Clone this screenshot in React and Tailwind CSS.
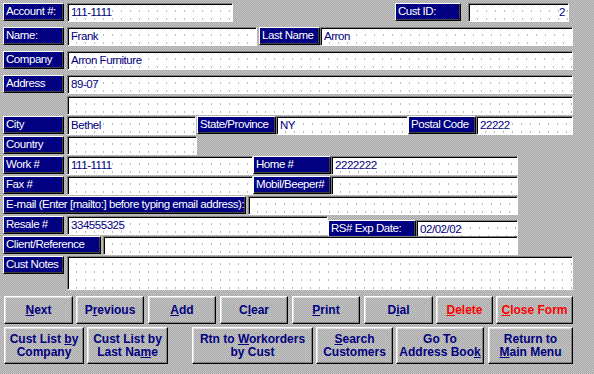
import React from "react";

const dither =
  "bg-[#b8b8b8] bg-[conic-gradient(#a6a6a6_25%,#c8c8c8_0_50%,#a6a6a6_0_75%,#c8c8c8_0)] bg-[length:2px_2px]";

const dots =
  "bg-white bg-[radial-gradient(circle,#b8b8b8_0.6px,transparent_0.8px)] bg-[length:9px_8px] bg-[position:4px_3px]";

function Label({ className = "", children }) {
  return (
    <div
      className={`h-[18px] shrink-0 bg-[#000080] text-white text-[11.5px] tracking-[-0.45px] leading-none flex items-center pl-[2px] whitespace-nowrap overflow-hidden border border-t-white border-l-white border-b-black border-r-black shadow-[inset_-1px_-1px_0_#404040] ${className}`}
    >
      {children}
    </div>
  );
}

function Field({ className = "", children }) {
  return (
    <div
      className={`h-[19px] shrink-0 ${dots} text-[#000080] text-[11.5px] tracking-[-0.45px] leading-none flex items-center pl-[3px] pr-[3px] whitespace-nowrap border border-t-[#808080] border-l-[#808080] border-b-white border-r-white shadow-[inset_1px_1px_0_#000] ${className}`}
    >
      {children}
    </div>
  );
}

function Btn({ className = "", red = false, children }) {
  return (
    <div
      className={`h-full shrink-0 ${dither} flex flex-col items-center justify-center text-center font-bold text-[12px] leading-[13px] ${
        red ? "text-[#ff0000]" : "text-[#000080]"
      } border border-t-white border-l-white border-b-black border-r-black shadow-[inset_-1px_-1px_0_#808080,inset_1px_1px_0_#e0e0e0] ${className}`}
    >
      {children}
    </div>
  );
}

export default function App() {
  return (
    <div
      className={`w-[594px] h-[374px] overflow-hidden ${dither} font-['Liberation_Sans',Arial,sans-serif] flex flex-col pt-[3px] pl-[3px]`}
    >
      {/* account / cust id */}
      <div className="flex h-[19px]">
        <Label className="w-[61px]">Account #:</Label>
        <Field className="w-[166px] ml-[3px] h-[18px]">111-1111</Field>
        <Label className="w-[66px] ml-[162px]">Cust ID:</Label>
        <Field className="w-[101px] ml-[7px] h-[18px] justify-end">2</Field>
      </div>

      <div className="flex h-[19px] mt-[5px]">
        <Label className="w-[61px]">Name:</Label>
        <Field className="w-[190px] ml-[3px]">Frank</Field>
        <Label className="w-[61px] ml-[2px]">Last Name</Label>
        <Field className="w-[253px]">Arron</Field>
      </div>

      <div className="flex h-[19px] mt-[5px]">
        <Label className="w-[61px]">Company</Label>
        <Field className="w-[506px] ml-[3px]">Arron Furniture</Field>
      </div>

      <div className="flex h-[19px] mt-[5px]">
        <Label className="w-[61px]">Address</Label>
        <Field className="w-[506px] ml-[3px]">89-07</Field>
      </div>

      <div className="flex h-[19px] mt-[2px]">
        <Field className="w-[506px] ml-[64px]" />
      </div>

      <div className="flex h-[19px] mt-[1px]">
        <Label className="w-[61px]">City</Label>
        <Field className="w-[129px] ml-[3px]">Bethel</Field>
        <Label className="w-[79px] ml-[1px]">State/Province</Label>
        <Field className="w-[132px]">NY</Field>
        <Label className="w-[68px]">Postal Code</Label>
        <Field className="w-[97px]">22222</Field>
      </div>

      <div className="flex h-[19px] mt-[1px]">
        <Label className="w-[61px]">Country</Label>
        <Field className="w-[130px] ml-[3px]" />
      </div>

      <div className="flex h-[19px] mt-[1px]">
        <Label className="w-[61px]">Work #</Label>
        <Field className="w-[186px] ml-[3px]">111-1111</Field>
        <Label className="w-[78px]">Home #</Label>
        <Field className="w-[187px]">2222222</Field>
      </div>

      <div className="flex h-[19px] mt-[1px]">
        <Label className="w-[61px]">Fax #</Label>
        <Field className="w-[186px] ml-[3px]" />
        <Label className="w-[78px]">Mobil/Beeper#</Label>
        <Field className="w-[187px]" />
      </div>

      <div className="flex h-[19px] mt-[1px]">
        <Label className="w-[243px]">E-mail (Enter [mailto:] before typing email address):</Label>
        <Field className="w-[270px] ml-[2px]" />
      </div>

      <div className="flex items-start h-[19px] mt-[1px]">
        <Label className="w-[61px]">Resale #</Label>
        <Field className="w-[261px] ml-[3px]">334555325</Field>
        <Label className="w-[88px] mt-[4px] h-[16px]">RS# Exp Date:</Label>
        <Field className="w-[102px] mt-[4px] h-[16px]">02/02/02</Field>
      </div>

      <div className="flex h-[19px] mt-[1px]">
        <Label className="w-[98px]">Client/Reference</Label>
        <Field className="w-[415px] ml-[2px]" />
      </div>

      <div className="flex items-start h-[34px] mt-[1px]">
        <Label className="w-[61px]">Cust Notes</Label>
        <Field className="w-[506px] ml-[3px] h-[34px]" />
      </div>

      {/* buttons */}
      <div className="flex h-[28px] mt-[6px] pl-[1px]">
        <Btn className="w-[69px]"><span><u>N</u>ext</span></Btn>
        <Btn className="w-[68px] ml-[3px]"><span>P<u>r</u>evious</span></Btn>
        <Btn className="w-[68px] ml-[4px]"><span><u>A</u>dd</span></Btn>
        <Btn className="w-[68px] ml-[4px]"><span>C<u>l</u>ear</span></Btn>
        <Btn className="w-[68px] ml-[4px]"><span><u>P</u>rint</span></Btn>
        <Btn className="w-[69px] ml-[4px]"><span>D<u>i</u>al</span></Btn>
        <Btn red className="w-[57px] ml-[3px]"><span><u>D</u>elete</span></Btn>
        <Btn red className="w-[77px] ml-[3px]"><span><u>C</u>lose Form</span></Btn>
      </div>

      <div className="flex h-[37px] mt-[3px] pl-[1px]">
        <Btn className="w-[80px]">
          <span>Cust List <u>b</u>y</span>
          <span>Company</span>
        </Btn>
        <Btn className="w-[81px] ml-[3px]">
          <span>Cust List by</span>
          <span>Last Na<u>m</u>e</span>
        </Btn>
        <Btn className="w-[121px] ml-[24px]">
          <span>Rtn to <u>W</u>orkorders</span>
          <span>by Cust</span>
        </Btn>
        <Btn className="w-[77px] ml-[3px]">
          <span><u>S</u>earch</span>
          <span>Customers</span>
        </Btn>
        <Btn className="w-[88px] ml-[3px]">
          <span>Go To</span>
          <span>Address Boo<u>k</u></span>
        </Btn>
        <Btn className="w-[85px] ml-[4px]">
          <span>Return to</span>
          <span><u>M</u>ain Menu</span>
        </Btn>
      </div>
    </div>
  );
}
